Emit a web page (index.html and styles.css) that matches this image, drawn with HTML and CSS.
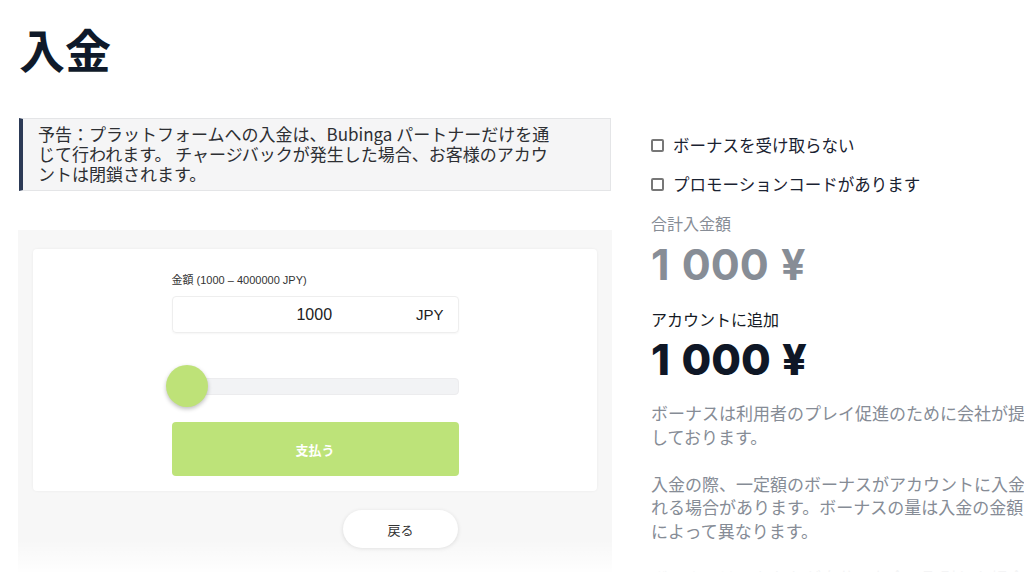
FILE: index.html
```html
<!DOCTYPE html>
<html lang="ja">
<head>
<meta charset="utf-8">
<title>入金</title>
<link rel="stylesheet" href="styles.css">
</head>
<body>
<div class="page">
  <h1 class="title">入金</h1>
  <div class="layout">
    <div class="left">
      <div class="notice">
        <p>予告：プラットフォームへの入金は、Bubinga パートナーだけを通じて行われます。 チャージバックが発生した場合、お客様のアカウントは閉鎖されます。</p>
      </div>
      <div class="panel">
        <div class="card">
          <div class="form">
            <div class="field-label">金額 (1000 – 4000000 JPY)</div>
            <div class="amount-input">
              <span class="amount-value">1000</span>
              <span class="amount-cur">JPY</span>
            </div>
            <div class="slider">
              <div class="slider-track"></div>
              <div class="slider-thumb"></div>
            </div>
            <button class="pay">支払う</button>
          </div>
        </div>
        <div class="back-row">
          <button class="back">戻る</button>
        </div>
      </div>
    </div>
    <div class="right">
      <label class="check"><span class="box"></span>ボーナスを受け取らない</label>
      <label class="check"><span class="box"></span>プロモーションコードがあります</label>
      <div class="sum-label">合計入金額</div>
      <div class="sum-value">1 000 ¥</div>
      <div class="add-label">アカウントに追加</div>
      <div class="add-value">1 000 ¥</div>
      <p class="info">ボーナスは利用者のプレイ促進のために会社が提供しております。</p>
      <p class="info">入金の際、一定額のボーナスがアカウントに入金される場合があります。ボーナスの量は入金の金額<span class="phrase">によって異なります。</span></p>
      <p class="info">ボーナスは、あなたが自分のお金で取引した場合のみ利用できます。</p>
    </div>
  </div>
  <div class="fade"></div>
</div>
</body>
</html>
```

FILE: styles.css
```css
html, body {
  margin: 0;
  padding: 0;
  background: #ffffff;
}
body {
  width: 1024px;
  height: 572px;
  overflow: hidden;
  font-family: "Noto Sans CJK JP", "Noto Sans", sans-serif;
  color: #1a2231;
}
.page {
  position: relative;
  width: 1024px;
  height: 572px;
  overflow: hidden;
}
.title {
  margin: 0;
  padding: 22px 0 0 19px;
  font-size: 46px;
  line-height: 52px;
  font-weight: 700;
  color: #0f1a2a;
}
.layout {
  display: flex;
  gap: 39px;
  padding-left: 18px;
  margin-top: 44px;
}
.left {
  width: 594px;
  flex: none;
}
.notice {
  margin-left: 1px;
  width: 592px;
  box-sizing: border-box;
  background: #f5f5f6;
  border: 1px solid #e4e5e7;
  border-left: 4px solid #2c3a56;
  padding: 5px 10px 6px 15px;
}
.notice p {
  margin: 0;
  width: 516px;
  font-size: 17px;
  line-height: 20px;
  color: #2d2f33;
}
.panel {
  margin-top: 39px;
  background: #f7f7f7;
  padding: 19px 15px 40px 15px;
  height: 400px;
  box-sizing: border-box;
}
.card {
  background: #ffffff;
  border-radius: 4px;
  box-shadow: 0 0 3px rgba(0,0,0,0.06);
  padding: 24px 0 15px;
  display: flex;
  justify-content: center;
}
.form {
  width: 287px;
  display: flex;
  flex-direction: column;
}
.field-label {
  font-family: "Liberation Sans", "Noto Sans CJK JP", sans-serif;
  font-size: 11px;
  line-height: 14px;
  color: #333333;
  margin-bottom: 9px;
}
.amount-input {
  height: 37px;
  box-sizing: border-box;
  border: 1px solid #eeeeee;
  border-radius: 4px;
  box-shadow: 0 1px 2px rgba(0,0,0,0.04);
  display: flex;
  align-items: center;
  font-family: "Liberation Sans", sans-serif;
  font-size: 16px;
  color: #222222;
  padding-right: 14px;
}
.amount-value {
  flex: 1;
  text-align: center;
  padding-left: 40px;
}
.amount-cur {
  font-size: 15px;
}
.slider {
  position: relative;
  height: 42px;
  margin-top: 32px;
  display: flex;
  align-items: center;
}
.slider-track {
  flex: 1;
  height: 15px;
  margin-left: 6px;
  background: #f2f3f5;
  border: 1px solid #ececee;
  border-radius: 4px;
}
.slider-thumb {
  position: absolute;
  left: -6px;
  top: 0;
  width: 42px;
  height: 42px;
  border-radius: 50%;
  background: #bee278;
  box-shadow: 0 2px 4px rgba(0,0,0,0.25);
}
.pay {
  margin-top: 15px;
  height: 54px;
  border: none;
  border-radius: 4px;
  background: #bde379;
  color: #ffffff;
  font-family: "Noto Sans CJK JP", sans-serif;
  font-weight: 700;
  font-size: 13px;
  cursor: pointer;
}
.back-row {
  display: flex;
  justify-content: flex-end;
  padding-right: 139px;
  margin-top: 19px;
}
.back {
  width: 115px;
  height: 38px;
  border: none;
  border-radius: 19px;
  background: #ffffff;
  box-shadow: 0 1px 4px rgba(0,0,0,0.12);
  font-family: "Noto Sans CJK JP", sans-serif;
  font-size: 13px;
  color: #333333;
}
.right {
  width: 400px;
  flex: none;
  padding-top: 15px;
}
.check {
  display: flex;
  align-items: center;
  height: 24px;
  margin-bottom: 15px;
  font-size: 16.5px;
  color: #1a2231;
}
.box {
  width: 13px;
  height: 13px;
  box-sizing: border-box;
  border: 2px solid #777777;
  border-radius: 2px;
  margin-right: 9px;
}
.sum-label {
  margin-top: 6px;
  font-size: 16px;
  line-height: 24px;
  color: #878d96;
}
.sum-value {
  margin-top: 4px;
  font-family: "Inter", "Liberation Sans", sans-serif;
  font-weight: 700;
  font-size: 43px;
  word-spacing: 2px;
  line-height: 50px;
  color: #878d96;
}
.add-label {
  margin-top: 18px;
  font-size: 16px;
  line-height: 24px;
  color: #141a24;
}
.add-value {
  margin-top: 3px;
  font-family: "Inter", "Liberation Sans", sans-serif;
  font-weight: 800;
  font-size: 43px;
  word-spacing: 2px;
  line-height: 50px;
  color: #0f1726;
}
.info {
  margin: 17px 0 0;
  font-size: 17px;
  line-height: 23.5px;
  color: #868c96;
}
.info + .info {
  margin-top: 23.5px;
}
.phrase {
  white-space: nowrap;
}
.fade {
  position: absolute;
  left: 0;
  right: 0;
  bottom: 0;
  height: 32px;
  background: linear-gradient(to bottom, rgba(255,255,255,0), rgba(255,255,255,0.92));
}
```
